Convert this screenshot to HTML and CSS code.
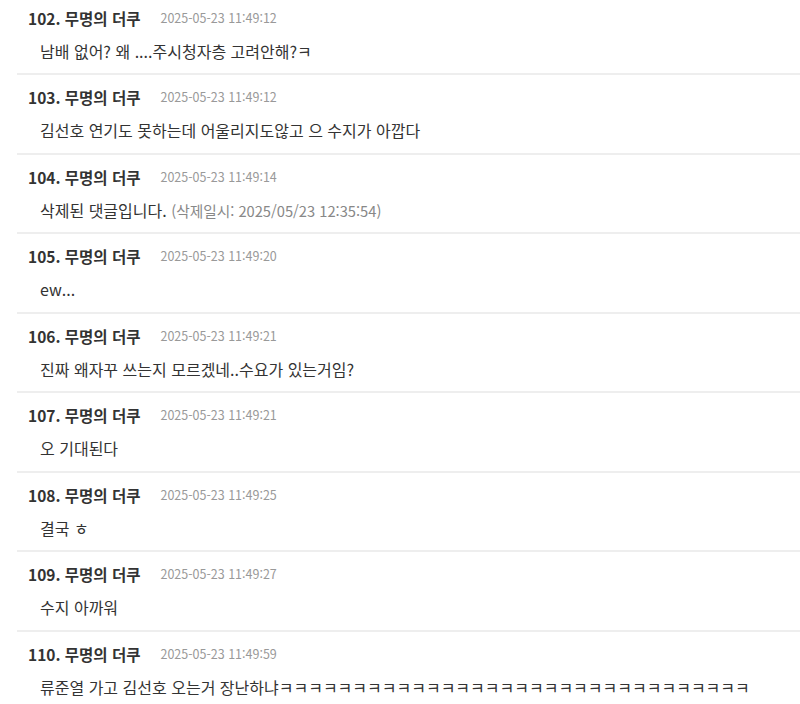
FILE: index.html
```html
<!DOCTYPE html>
<html lang="ko">
<head>
<meta charset="utf-8">
<link rel="stylesheet" href="styles.css">
</head>
<body>
<ul class="comments">
  <li class="comment">
    <div class="head"><span class="name">102. 무명의 더쿠</span><span class="date">2025-05-23 11:49:12</span></div>
    <div class="body">남배 없어? 왜 ....주시청자층 고려안해?ㅋ</div>
  </li>
  <li class="comment">
    <div class="head"><span class="name">103. 무명의 더쿠</span><span class="date">2025-05-23 11:49:12</span></div>
    <div class="body">김선호 연기도 못하는데 어울리지도않고 으 수지가 아깝다</div>
  </li>
  <li class="comment">
    <div class="head"><span class="name">104. 무명의 더쿠</span><span class="date">2025-05-23 11:49:14</span></div>
    <div class="body">삭제된 댓글입니다. <span class="deleted">(삭제일시: 2025/05/23 12:35:54)</span></div>
  </li>
  <li class="comment">
    <div class="head"><span class="name">105. 무명의 더쿠</span><span class="date">2025-05-23 11:49:20</span></div>
    <div class="body">ew...</div>
  </li>
  <li class="comment">
    <div class="head"><span class="name">106. 무명의 더쿠</span><span class="date">2025-05-23 11:49:21</span></div>
    <div class="body">진짜 왜자꾸 쓰는지 모르겠네..수요가 있는거임?</div>
  </li>
  <li class="comment">
    <div class="head"><span class="name">107. 무명의 더쿠</span><span class="date">2025-05-23 11:49:21</span></div>
    <div class="body">오 기대된다</div>
  </li>
  <li class="comment">
    <div class="head"><span class="name">108. 무명의 더쿠</span><span class="date">2025-05-23 11:49:25</span></div>
    <div class="body">결국 ㅎ</div>
  </li>
  <li class="comment">
    <div class="head"><span class="name">109. 무명의 더쿠</span><span class="date">2025-05-23 11:49:27</span></div>
    <div class="body">수지 아까워</div>
  </li>
  <li class="comment">
    <div class="head"><span class="name">110. 무명의 더쿠</span><span class="date">2025-05-23 11:49:59</span></div>
    <div class="body">류준열 가고 김선호 오는거 장난하냐ㅋㅋㅋㅋㅋㅋㅋㅋㅋㅋㅋㅋㅋㅋㅋㅋㅋㅋㅋㅋㅋㅋㅋㅋㅋㅋㅋㅋㅋㅋㅋㅋ</div>
  </li>
</ul>
</body>
</html>
```

FILE: styles.css
```css
html, body {
  margin: 0;
  padding: 0;
  background: #fff;
  overflow: hidden;
}
body {
  font-family: "Noto Sans CJK KR", "Noto Sans", sans-serif;
  color: #333;
}
.comments {
  list-style: none;
  margin: -4px 0 0 17px;
  padding: 0;
}
.comment {
  padding: 12px 0 12.45px 11px;
  border-bottom: 2px solid #eeeeee;
}
.head {
  display: flex;
  align-items: center;
  gap: 20px;
  height: 20px;
}
.name {
  font-size: 15.5px;
  line-height: 20px;
  font-weight: bold;
  color: #333;
}
.date {
  font-size: 12.5px;
  line-height: 20px;
  color: #999;
}
.body {
  height: 20px;
  margin-top: 13px;
  padding-left: 12px;
  font-size: 16px;
  line-height: 20px;
  color: #333;
  white-space: nowrap;
}
.deleted {
  font-size: 14.7px;
  color: #888;
}
```
